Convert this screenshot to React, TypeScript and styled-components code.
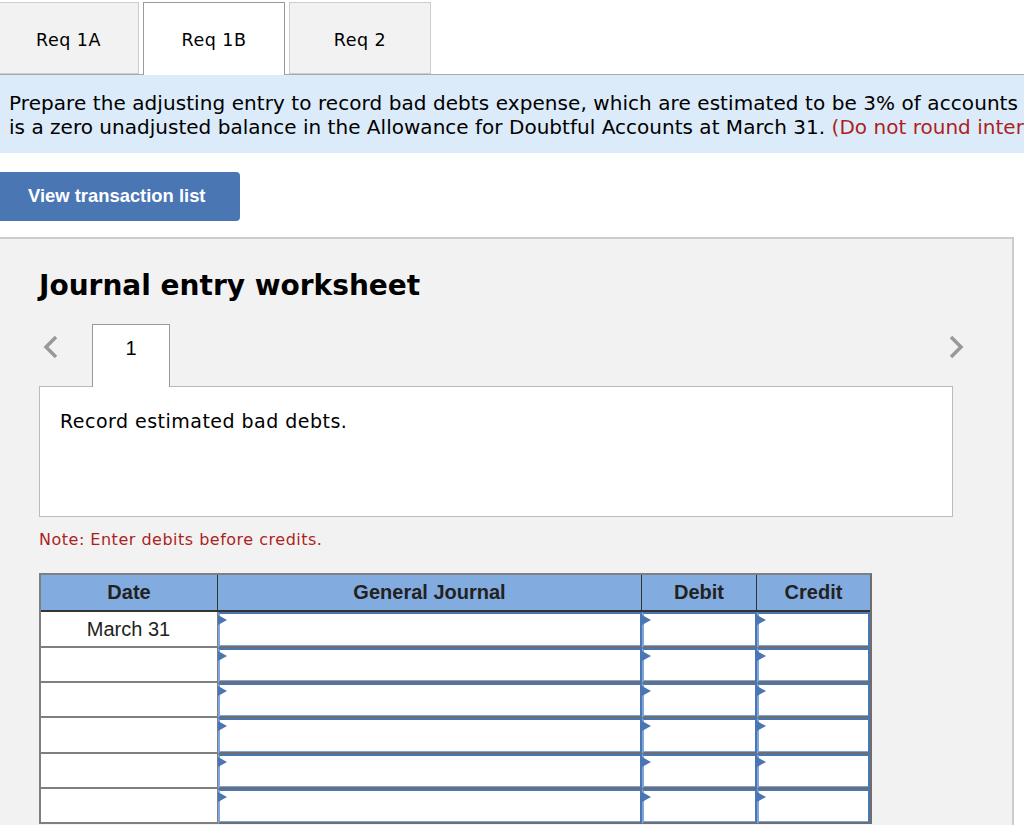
import React from "react";
import styled, { createGlobalStyle } from "styled-components";

const Global = createGlobalStyle`
  html, body { margin: 0; padding: 0; background: #fff; overflow: hidden; }
  body { font-family: "DejaVu Sans", Verdana, sans-serif; color: #000; }
`;
const Page = styled.div`
  width: 1024px;
  height: 825px;
  overflow: hidden;
  display: flex;
  flex-direction: column;
  & > * { flex: none; }
`;
const TabBar = styled.div`
  display: flex;
  gap: 4px;
  height: 75px;
  box-sizing: border-box;
  padding-top: 2px;
  margin-left: -2px;
  border-bottom: 1px solid #a9a9a9;
`;
const Tab = styled.div<{ $active?: boolean; $w: number }>`
  width: ${(p) => p.$w}px;
  height: ${(p) => (p.$active ? 73 : 72)}px;
  box-sizing: border-box;
  display: flex;
  align-items: center;
  justify-content: center;
  padding-top: ${(p) => (p.$active ? 1 : 3)}px;
  font-size: 17.5px;
  letter-spacing: 0.5px;
  background: ${(p) => (p.$active ? "#fff" : "#f2f2f2")};
  border: 1px solid ${(p) => (p.$active ? "#999" : "#ccc")};
  border-bottom: ${(p) => (p.$active ? "none" : "1px solid #ccc")};
  position: relative;
  z-index: 1;
`;
const Banner = styled.div`
  background: #dcebf9;
  height: 78px;
  box-sizing: border-box;
  padding: 16px 0 0 9px;
  font-size: 20px;
  line-height: 24px;
  white-space: nowrap;
  overflow: hidden;
`;
const BannerLine = styled.div<{ $spacing: number }>`
  letter-spacing: ${(p) => p.$spacing}px;
`;
const Red = styled.span`
  color: #ad1f1f;
`;
const ButtonRow = styled.div`
  margin-top: 19px;
`;
const ViewButton = styled.button`
  display: block;
  width: 240px;
  height: 49px;
  padding: 0 0 2px 28px;
  border: none;
  border-radius: 0 4px 4px 0;
  background: #4a76b4;
  color: #fff;
  font-family: "Liberation Sans", Arial, sans-serif;
  font-weight: 700;
  font-size: 18.4px;
  text-align: left;
`;
const Panel = styled.section`
  margin-top: 16px;
  width: 1014px;
  height: 590px;
  box-sizing: border-box;
  background: #f2f2f2;
  border-top: 2px solid #ccc;
  border-right: 2px solid #ccc;
  padding: 29px 0 0 39px;
`;
const Heading = styled.h2`
  margin: 0;
  font-size: 28px;
  line-height: 36px;
  font-weight: 700;
`;
const Stepper = styled.div`
  margin-top: 20px;
  width: 925px;
  height: 62px;
  display: flex;
  align-items: flex-start;
`;
const Arrow = styled.svg<{ $left?: boolean }>`
  width: 16px;
  height: 24px;
  margin-top: 11px;
  margin-left: ${(p) => (p.$left ? 4 : 0)}px;
  flex: none;
  fill: none;
  stroke: #999;
  stroke-width: 3.5;
`;
const StepTab = styled.div`
  width: 78px;
  height: 63px;
  box-sizing: border-box;
  margin-left: 33px;
  padding-top: 12px;
  background: #fff;
  border: 1px solid #999;
  border-bottom: none;
  text-align: center;
  font-family: "Liberation Sans", Arial, sans-serif;
  font-size: 20px;
  line-height: 22px;
  position: relative;
  z-index: 1;
`;
const Spacer = styled.div`
  flex: 1;
`;
const DescBox = styled.div`
  width: 914px;
  height: 131px;
  box-sizing: border-box;
  background: #fff;
  border: 1px solid #bbb;
  padding: 22px 0 0 20px;
  font-size: 19px;
  letter-spacing: 0.48px;
  line-height: 24px;
`;
const Note = styled.div`
  margin-top: 13px;
  color: #ad1f1f;
  font-size: 16px;
  letter-spacing: 0.5px;
  line-height: 20px;
`;
const Table = styled.div`
  margin-top: 23px;
  width: 833px;
  display: grid;
  grid-template-columns: 177px 424px 115px 113px;
  grid-template-rows: 37.4px repeat(6, 35.3px);
  box-sizing: border-box;
  border-top: 2px solid #7f7f7f;
  border-left: 2px solid #7f7f7f;
  border-right: 2px solid #6e6e6e;
`;
const HeadCell = styled.div`
  background: #82acdf;
  color: #222;
  display: flex;
  align-items: center;
  justify-content: center;
  box-sizing: border-box;
  font-family: "Liberation Sans", Arial, sans-serif;
  font-weight: 700;
  font-size: 20px;
  border-right: 1px solid #333;
  border-bottom: 2px solid #333;
  &:nth-of-type(4) { border-right: none; }
`;
const DateCell = styled.div`
  background: #fff;
  color: #222;
  display: flex;
  align-items: center;
  justify-content: center;
  padding: 1px 1px 0 0;
  font-family: "Liberation Sans", Arial, sans-serif;
  font-size: 20px;
  box-sizing: border-box;
  border-right: 1px solid #7f7f7f;
  border-bottom: 2px solid #7f7f7f;
`;
const EntryCell = styled.div`
  position: relative;
  background: #fff;
  box-sizing: border-box;
  border-top: 2px solid #4a76b4;
  border-left: 2px solid #7ea6dc;
  border-right: 2px solid #4a76b4;
  border-bottom: 2px solid #6e6e6e;
  box-shadow: inset 0 -1px 0 #7ea6dc;
  &::before {
    content: "";
    position: absolute;
    left: -2px;
    top: 1px;
    border-left: 9px solid #4a76b4;
    border-top: 5px solid transparent;
    border-bottom: 5px solid transparent;
  }
`;

const headers = ["Date", "General Journal", "Debit", "Credit"];
const rows = ["March 31", "", "", "", "", ""];

export default function App() {
  return (
    <Page>
      <Global />
      <TabBar>
        <Tab $w={141}>Req 1A</Tab>
        <Tab $w={142} $active>Req 1B</Tab>
        <Tab $w={142}>Req 2</Tab>
      </TabBar>
      <Banner>
        <BannerLine $spacing={0.07}>
          Prepare the adjusting entry to record bad debts expense, which are estimated to be 3% of accounts
        </BannerLine>
        <BannerLine $spacing={0.02}>
          is a zero unadjusted balance in the Allowance for Doubtful Accounts at March 31.{" "}
          <Red>(Do not round intermediate calculations.)</Red>
        </BannerLine>
      </Banner>
      <ButtonRow>
        <ViewButton>View transaction list</ViewButton>
      </ButtonRow>
      <Panel>
        <Heading>Journal entry worksheet</Heading>
        <Stepper>
          <Arrow $left viewBox="0 0 16 24">
            <path d="M13 2 L3 12 L13 22" />
          </Arrow>
          <StepTab>1</StepTab>
          <Spacer />
          <Arrow viewBox="0 0 16 24">
            <path d="M3 2 L13 12 L3 22" />
          </Arrow>
        </Stepper>
        <DescBox>Record estimated bad debts.</DescBox>
        <Note>Note: Enter debits before credits.</Note>
        <Table>
          {headers.map((h) => (
            <HeadCell key={h}>{h}</HeadCell>
          ))}
          {rows.map((r, i) => (
            <React.Fragment key={i}>
              <DateCell>{r}</DateCell>
              <EntryCell />
              <EntryCell />
              <EntryCell />
            </React.Fragment>
          ))}
        </Table>
      </Panel>
    </Page>
  );
}
